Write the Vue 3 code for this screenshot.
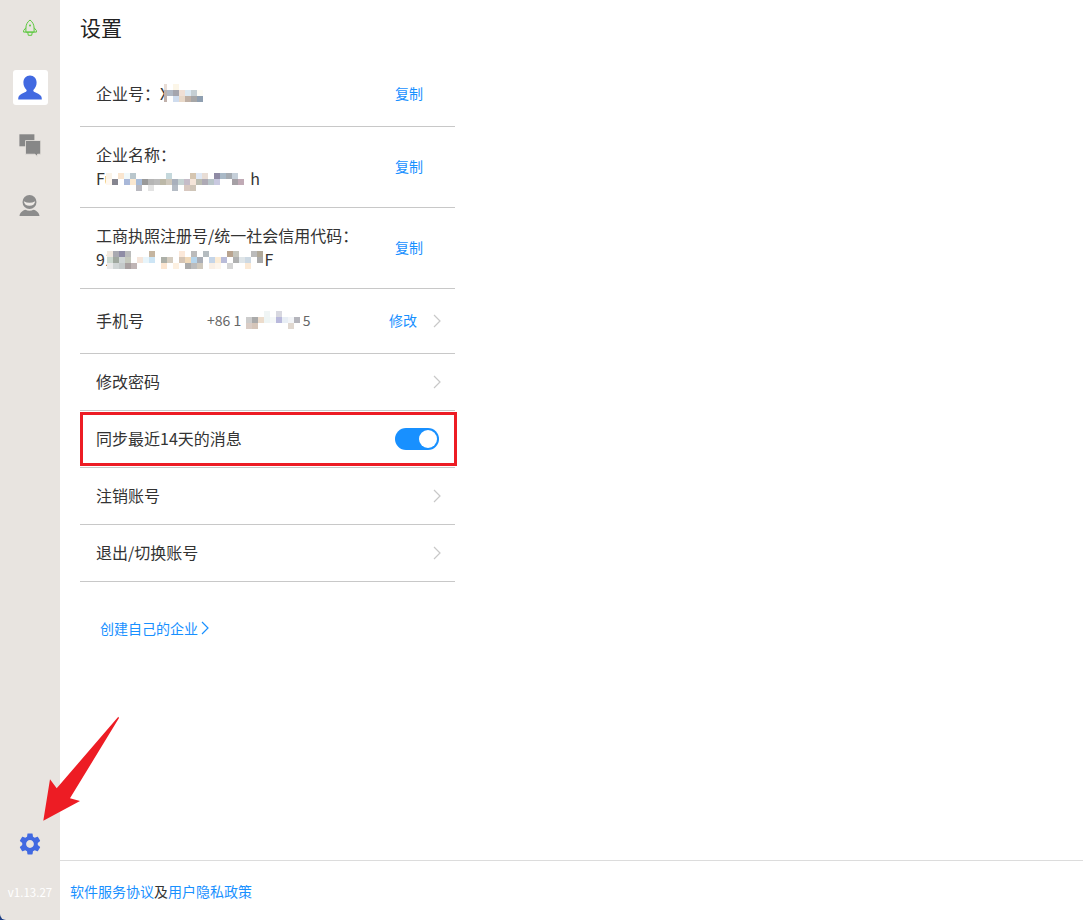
<script setup>
const parse = (rows) => rows.map((r) => r.split(' ')).flat().map((c) => (c === '-' ? '#fff' : c))

const mosaics = {
  id: {
    cols: '3px repeat(6, 6px)',
    cells: parse([
      '#e8dcd5 - #fcf6e8 - - - -',
      '#bcb2ad #b0b8c4 #a5a5ad #efdfd5 #dce9f2 #c5cfd3 #fdfcf5',
      '#c0b0aa - #cfdcee #e8d8c8 #bfb0a5 #a6a6a6 #8f9fb0',
    ]),
  },
  name: {
    cols: 'repeat(23, 6px)',
    cells: parse([
      '#faf3e8 - #f9e5cf #f0f8fa #b9c6cc - - - - - #c5d8dc - - - #d5c5b0 #dfe8f5 #e8ddd5 - #8f8ba5 #a9b9c7 #a5abb2 #c5cfd9 -',
      '#fff8f0 #85858f - #a9b8d9 #fae8d0 #a8bcd9 #999999 #b5b5b5 #bbbbbb #bcb8a8 #cfc8bc #a9b0bc #c5d2d2 #c5bcc8 #f5e5d9 #bbbcb0 #aeaab5 #b9c5c9 #c9c9e0 - - #a5a0a5 #c0aab5',
      '- - - - - #b9b9c0 - #e3e3e3 - - - #b5bcc5 - #d8c8c0 #cfc5b8 - - - - - - - -',
    ]),
  },
  code: {
    cols: 'repeat(26, 6px)',
    cells: parse([
      '#f0e8df #a9a9b0 #8f8ca5 #bbbcbc - - - #c5b5a0 - - - - #fbe8d9 - #bbbbbb - #b5bcc0 - - - #b9a48f #c5c5bc - - #bbbbbb #b0a898',
      '#cdd9d0 #a0a89f #cfd5d5 #c5c8bc - #f5e5da #e8f5fb #cde5f5 - #adb0a8 #d5cdc0 - #d5c5b5 #f0d9b9 #b5d5ec #a9adb5 - #c5d5e8 #fcecd5 #b9bcd9 - #afb0b0 #dfe5e8 #cdd9e3 - #aaaaaa',
      '#eaeaea #d0d5d5 #c5caca #a9a0a0 #c0b5b5 - - - - #fbe5d0 - #fdf0e0 - #aaaaaa #bcbcbc #cfc8bc - #f9efe5 #fdf5ec - #d5d5d5 - - #fbe9d5 - -',
    ]),
  },
  phone: {
    cols: 'repeat(9, 6px)',
    cells: parse([
      '- - - #f0f5f5 - #d8d8e0 - - -',
      '#cccccc #aaaaaa #ecdccc #eef5f5 #f5f8f8 #b9b9dc #e8eef5 #f3f5f8 #b5b5bc',
      '#d9ccc5 #d5c5b9 - - - - - #e0d8d0 -',
    ]),
  },
}
</script>

<template>
  <div class="app">
    <aside class="rail">
      <div class="rail-inner">
        <svg class="logo" width="16" height="18" viewBox="0 0 16 18" fill="none" stroke="#5cc83e" stroke-width="1">
          <path d="M8 1C5.200 3 3.900 6 3.900 9v4.100h8.200V9C12.100 6 10.800 3 8 1z" />
          <path d="M3.900 8.800 1.600 11.500v1.600H14.400v-1.600L12.100 8.800" />
          <path d="M5.700 13.100 6.300 16.300h3.400l.6-3.200" />
          <circle cx="8" cy="6.500" r="1" fill="#5cc83e" stroke="none" />
        </svg>

        <div class="nav-active">
          <svg width="24" height="25" viewBox="0 0 24 25">
            <path fill="#4169e1" d="M12 .5c3.900 0 6.600 3 6.600 7 0 3-1.200 5.600-3 7.200-.5.6-.3 1.600.4 2 2.700 1.300 6.200 2.700 7.200 4.600.5 1 .6 2 .6 3.200H.2c0-1.200.1-2.200.6-3.200 1-1.900 4.500-3.300 7.200-4.600.7-.4.900-1.400.4-2-1.800-1.600-3-4.200-3-7.200 0-4 2.700-7 6.600-7z" />
          </svg>
        </div>

        <svg class="chat" width="23" height="23" viewBox="0 0 23 23">
          <rect x="0.400" y="0.300" width="15" height="12" fill="#878787" />
          <path d="M6.500 6.500h15.200v13.700h-3.200v2.500l-2.500-2.500H6.500z" fill="#878787" stroke="#e8e4e0" stroke-width="0.800" />
        </svg>

        <svg class="agent" width="22" height="22" viewBox="0 0 22 22">
          <circle cx="10.500" cy="7" r="7" fill="#8c8c8c" />
          <path d="M4.800 6.200Q10.500 9.400 16.200 6.200 15.500 10.800 10.500 10.800 5.500 10.800 4.800 6.200z" fill="#eeeae6" />
          <path d="M.5 21c.3-3.300 3-5.400 6-6.200 1.200.7 2.500 1 4 1s2.800-.3 4-1c3 .8 5.700 2.900 6 6.200z" fill="#8c8c8c" />
        </svg>

        <svg class="gear" width="26" height="26" viewBox="0 0 24 24">
          <path fill="#4169e1" d="M19.140 12.940c.04-.3.06-.61.06-.94 0-.32-.02-.64-.07-.94l2.030-1.580c.18-.14.23-.41.12-.61l-1.920-3.320c-.12-.22-.37-.29-.59-.22l-2.390.96c-.5-.38-1.030-.7-1.620-.94l-.36-2.540c-.04-.24-.24-.41-.48-.41h-3.840c-.24 0-.43.17-.47.41l-.36 2.540c-.59.24-1.130.57-1.620.94l-2.390-.96c-.22-.08-.47 0-.59.22L2.740 8.870c-.12.21-.08.47.12.61l2.030 1.580c-.05.3-.09.63-.09.94s.02.64.07.94l-2.030 1.580c-.18.14-.23.41-.12.61l1.920 3.320c.12.22.37.29.59.22l2.390-.96c.5.38 1.030.7 1.620.94l.36 2.540c.05.24.24.41.48.41h3.840c.24 0 .44-.17.47-.41l.36-2.540c.59-.24 1.130-.56 1.620-.94l2.390.96c.22.08.47 0 .59-.22l1.920-3.320c.12-.22.07-.47-.12-.61l-2.010-1.580zM12 15.600c-1.980 0-3.600-1.620-3.600-3.600s1.620-3.600 3.600-3.600 3.600 1.620 3.600 3.600-1.620 3.600-3.600 3.600z" />
        </svg>

        <div class="version">v1.13.27</div>
      </div>
    </aside>

    <main class="main">
      <div class="content">
        <h1 class="title">设置</h1>

        <section class="list">
          <div class="row row-tall">
            <div class="stack">
              <div class="line">企业号：X<span class="mosaic m-id" :style="{ gridTemplateColumns: mosaics.id.cols }"><i v-for="(c, i) in mosaics.id.cells" :key="i" :style="{ background: c }"></i></span></div>
            </div>
            <a class="copy">复制</a>
          </div>

          <div class="row">
            <div class="stack">
              <div class="line">企业名称：</div>
              <div class="line">Fu<span class="mosaic m-name" :style="{ gridTemplateColumns: mosaics.name.cols }"><i v-for="(c, i) in mosaics.name.cells" :key="i" :style="{ background: c }"></i></span>h</div>
            </div>
            <a class="copy">复制</a>
          </div>

          <div class="row">
            <div class="stack">
              <div class="line">工商执照注册号/统一社会信用代码：</div>
              <div class="line">91<span class="mosaic m-code" :style="{ gridTemplateColumns: mosaics.code.cols }"><i v-for="(c, i) in mosaics.code.cells" :key="i" :style="{ background: c }"></i></span>F</div>
            </div>
            <a class="copy">复制</a>
          </div>

          <div class="row row-tall row-nav">
            <span class="label">手机号</span>
            <span class="phone">+86 1<span class="mosaic m-phone" :style="{ gridTemplateColumns: mosaics.phone.cols }"><i v-for="(c, i) in mosaics.phone.cells" :key="i" :style="{ background: c }"></i></span>5</span>
            <a class="edit">修改</a>
            <svg class="chev" width="8" height="14" viewBox="0 0 8 14" fill="none" stroke="#c8c8c8" stroke-width="1.200"><path d="M1 1l6 6-6 6" /></svg>
          </div>

          <div class="row row-short row-nav">
            <span class="label">修改密码</span>
            <svg class="chev" width="8" height="14" viewBox="0 0 8 14" fill="none" stroke="#c8c8c8" stroke-width="1.200"><path d="M1 1l6 6-6 6" /></svg>
          </div>

          <div class="row row-short row-switch">
            <span class="label">同步最近14天的消息</span>
            <span class="switch"><span class="knob"></span></span>
            <div class="callout"></div>
          </div>

          <div class="row row-short row-nav">
            <span class="label">注销账号</span>
            <svg class="chev" width="8" height="14" viewBox="0 0 8 14" fill="none" stroke="#c8c8c8" stroke-width="1.200"><path d="M1 1l6 6-6 6" /></svg>
          </div>

          <div class="row row-short row-nav">
            <span class="label">退出/切换账号</span>
            <svg class="chev" width="8" height="14" viewBox="0 0 8 14" fill="none" stroke="#c8c8c8" stroke-width="1.200"><path d="M1 1l6 6-6 6" /></svg>
          </div>
        </section>

        <a class="create">创建自己的企业<svg width="8" height="14" viewBox="0 0 8 14" fill="none" stroke="#1890ff" stroke-width="1.200"><path d="M1 1l6 6-6 6" /></svg></a>
      </div>

      <footer class="footer">
        <a>软件服务协议</a><span>及</span><a>用户隐私政策</a>
      </footer>
    </main>

    <svg class="arrow" width="90" height="115" viewBox="0 0 90 115">
      <path fill="#ed1c24" d="M3.300 114.700 10 73.300l6.700 9L78.300 10.700l.7 1.300-49 80.300 10 2.700z" />
    </svg>
  </div>
</template>

<style>
html,
body {
  margin: 0;
  background: #fff;
}
</style>

<style scoped>
.app {
  position: relative;
  display: flex;
  height: 920px;
  width: 1083px;
  overflow: hidden;
  font-family: "Noto Sans CJK SC", "Noto Sans", "Liberation Sans", sans-serif;
  color: #333;
}

.rail {
  width: 60px;
  flex: none;
  background: linear-gradient(to top, #1d3f86 6px, #e8e4e0 6px);
}

.rail-inner {
  height: 100%;
  background: #e8e4e0;
  border-bottom-left-radius: 6px;
  display: flex;
  flex-direction: column;
  align-items: center;
}

.logo {
  margin-top: 19px;
}

.nav-active {
  margin-top: 33px;
  width: 35px;
  height: 35px;
  background: #fff;
  border-radius: 3px;
  display: flex;
  align-items: center;
  justify-content: center;
}

.chat {
  margin-top: 29px;
}

.agent {
  margin-top: 38px;
}

.gear {
  margin-top: auto;
}

.version {
  margin-top: 27px;
  margin-bottom: 20px;
  height: 16px;
  line-height: 16px;
  font-size: 11.5px;
  color: #fff;
  white-space: nowrap;
}

.main {
  flex: 1;
  min-width: 0;
  display: flex;
  flex-direction: column;
}

.content {
  flex: 1;
  padding-left: 20px;
}

.title {
  margin: 0;
  height: 62px;
  padding-top: 12px;
  box-sizing: border-box;
  font-size: 21px;
  line-height: 30px;
  font-weight: 400;
  color: #222;
}

.list {
  width: 375px;
}

.row {
  position: relative;
  height: 81px;
  box-sizing: border-box;
  display: flex;
  align-items: center;
  padding: 0 32px 0 16px;
  border-bottom: 1px solid #c8c8c8;
  font-size: 16px;
}

.row-tall {
  height: 65px;
}

.row-short {
  height: 57px;
}

.row-nav {
  padding-right: 14px;
}

.row-switch {
  padding-right: 16px;
}

.stack,
.label,
.copy,
.edit,
.phone {
  margin-bottom: 2px;
}

.stack {
  flex: 1;
  min-width: 0;
}

.line {
  line-height: 24px;
  height: 24px;
  white-space: nowrap;
}

.label {
  flex: 1;
  white-space: nowrap;
}

.row-tall.row-nav .label {
  flex: none;
  width: 111px;
}

.mosaic {
  display: inline-grid;
  grid-auto-rows: 6px;
  vertical-align: top;
  background: #fff;
}

.mosaic i {
  display: block;
}

.m-id {
  margin: 3px 0 0 -5px;
}

.m-name {
  margin: 7px 6px 0 -8px;
}

.m-code {
  margin: 4px 1px 0 -6.400px;
}

.m-phone {
  margin: 3px 3px 0 4.500px;
}

.copy,
.edit {
  flex: none;
  font-size: 14px;
  color: #1890ff;
  line-height: 20px;
}

.phone {
  flex: 1;
  font-size: 14px;
  line-height: 24px;
  height: 24px;
  color: #666;
  white-space: nowrap;
}

.edit {
  margin-right: 16px;
}

.chev {
  flex: none;
}

.switch {
  flex: none;
  width: 44px;
  height: 22px;
  border-radius: 11px;
  background: #1890ff;
  display: flex;
  align-items: center;
  justify-content: flex-end;
  padding-right: 2px;
  box-sizing: border-box;
}

.knob {
  width: 18px;
  height: 18px;
  border-radius: 50%;
  background: #fff;
}

.callout {
  position: absolute;
  left: 0;
  right: -2px;
  top: 1px;
  height: 54px;
  box-sizing: border-box;
  border: 3px solid #ed1c24;
}

.create {
  display: flex;
  align-items: center;
  gap: 3px;
  margin: 35px 0 0 20px;
  font-size: 14px;
  line-height: 22px;
  color: #1890ff;
}

.footer {
  height: 60px;
  box-sizing: border-box;
  border-top: 1px solid #dcdcdc;
  padding: 20px 0 0 10px;
  font-size: 14px;
  line-height: 20px;
  color: #333;
}

.footer a {
  color: #1890ff;
}

.arrow {
  position: absolute;
  left: 40px;
  top: 706px;
}
</style>
